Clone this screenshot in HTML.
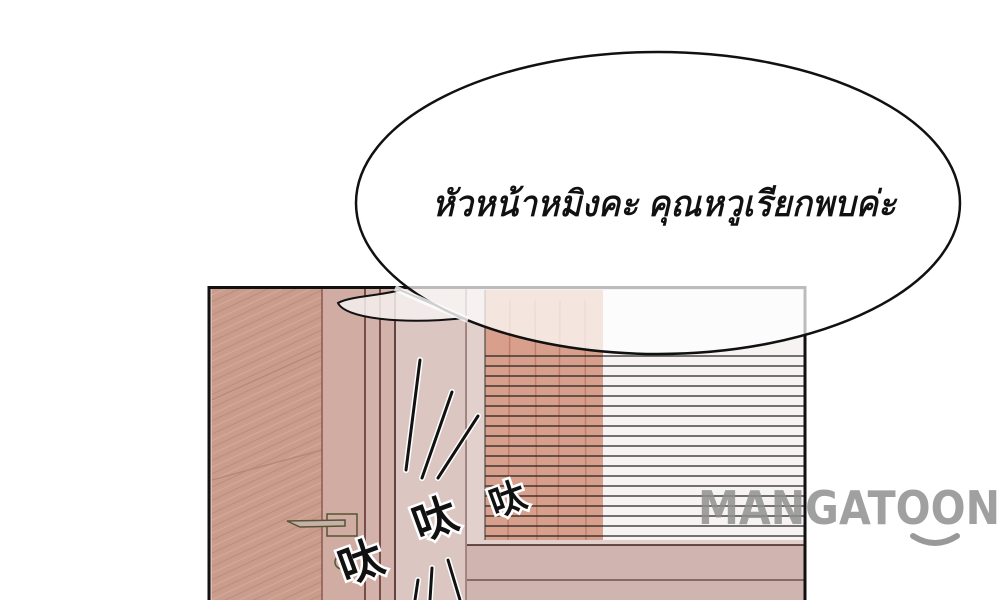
<!DOCTYPE html>
<html><head><meta charset="utf-8"><style>
html,body{margin:0;padding:0;background:#fff;width:1000px;height:600px;overflow:hidden}
</style></head><body>
<svg width="1000" height="600" viewBox="0 0 1000 600" xmlns="http://www.w3.org/2000/svg">
<defs>
<pattern id="wood" width="12" height="12" patternUnits="userSpaceOnUse" patternTransform="rotate(-25)">
<rect width="12" height="12" fill="#c99c8c"/>
<line x1="0" y1="3" x2="12" y2="3" stroke="#bb8d7f" stroke-width="1"/>
<line x1="0" y1="9" x2="12" y2="9" stroke="#d4ab9c" stroke-width="1"/>
</pattern>
</defs>
<rect width="1000" height="600" fill="#fff"/>
<rect x="209" y="286" width="596" height="314" fill="#d8bdb7"/>
<rect x="212" y="289" width="110" height="311" fill="url(#wood)"/>
<line x1="212" y1="400" x2="322" y2="350" stroke="#b8887c" stroke-width="1.5"/>
<line x1="212" y1="480" x2="322" y2="450" stroke="#b8887c" stroke-width="1.5"/>
<rect x="322" y="289" width="43" height="311" fill="#d1aca3"/>
<rect x="365" y="289" width="30" height="311" fill="#d3b2ab"/>
<line x1="322" y1="289" x2="322" y2="600" stroke="#8a5a52" stroke-width="1.5"/>
<line x1="365" y1="289" x2="365" y2="600" stroke="#5a2c28" stroke-width="1.5"/>
<line x1="380" y1="289" x2="380" y2="600" stroke="#5a2c28" stroke-width="1.5"/>
<line x1="395" y1="289" x2="395" y2="600" stroke="#3a1e1c" stroke-width="1.5"/>
<rect x="396" y="289" width="70" height="311" fill="#dcc6c2"/>
<line x1="466" y1="289" x2="466" y2="600" stroke="#6a4a48" stroke-width="1"/>
<rect x="467" y="289" width="338" height="311" fill="#e2d0cc"/>
<rect x="485" y="290" width="320" height="250" fill="#f7f3f2"/>
<rect x="485" y="290" width="118" height="250" fill="#d8a08c"/>
<g stroke="#c07e6a" stroke-width="1.5">
<line x1="510" y1="300" x2="508" y2="540"/><line x1="535" y1="300" x2="537" y2="540"/><line x1="560" y1="300" x2="558" y2="540"/><line x1="585" y1="300" x2="586" y2="540"/>
</g>
<rect x="467" y="545" width="338" height="55" fill="#cfb4af"/>
<line x1="467" y1="545" x2="805" y2="545" stroke="#3a2220" stroke-width="1.5"/>
<line x1="467" y1="580" x2="805" y2="580" stroke="#3a2220" stroke-width="1"/>
<g stroke="#222" stroke-width="1.2">
<line x1="485" y1="356" x2="805" y2="356"/><line x1="485" y1="366" x2="805" y2="366"/><line x1="485" y1="376" x2="805" y2="376"/><line x1="485" y1="386" x2="805" y2="386"/><line x1="485" y1="396" x2="805" y2="396"/><line x1="485" y1="406" x2="805" y2="406"/><line x1="485" y1="416" x2="805" y2="416"/><line x1="485" y1="426" x2="805" y2="426"/><line x1="485" y1="436" x2="805" y2="436"/><line x1="485" y1="446" x2="805" y2="446"/><line x1="485" y1="456" x2="805" y2="456"/><line x1="485" y1="466" x2="805" y2="466"/><line x1="485" y1="476" x2="805" y2="476"/><line x1="485" y1="486" x2="805" y2="486"/><line x1="485" y1="496" x2="805" y2="496"/><line x1="485" y1="506" x2="805" y2="506"/><line x1="485" y1="516" x2="805" y2="516"/><line x1="485" y1="526" x2="805" y2="526"/><line x1="485" y1="536" x2="805" y2="536"/>
</g>
<line x1="485" y1="290" x2="485" y2="540" stroke="#333" stroke-width="1"/>
<rect x="327" y="514" width="30" height="22" fill="none" stroke="#553" stroke-width="1.5"/>
<path d="M287 521 L345 520 L345 526 L300 527 Z" fill="#c8b0aa" stroke="#553" stroke-width="1.5"/>
<circle cx="342" cy="562" r="7" fill="none" stroke="#553" stroke-width="1.5"/>
<path d="M209 600 V287.5 H805 V600" fill="none" stroke="#111" stroke-width="3"/>
<g stroke="#fff" stroke-width="6" stroke-linecap="round">
<line x1="420" y1="360" x2="406" y2="470"/><line x1="452" y1="392" x2="422" y2="478"/><line x1="478" y1="416" x2="438" y2="478"/>
<line x1="415" y1="600" x2="418" y2="580"/><line x1="430" y1="600" x2="432" y2="568"/><line x1="460" y1="600" x2="448" y2="560"/>
</g>
<g stroke="#111" stroke-width="3" stroke-linecap="round">
<line x1="420" y1="360" x2="406" y2="470"/><line x1="452" y1="392" x2="422" y2="478"/><line x1="478" y1="416" x2="438" y2="478"/>
<line x1="415" y1="600" x2="418" y2="580"/><line x1="430" y1="600" x2="432" y2="568"/><line x1="460" y1="600" x2="448" y2="560"/>
</g>
<g font-family="DejaVu Sans, sans-serif" font-size="44" font-weight="bold" fill="#111" stroke="#fff" stroke-width="5" paint-order="stroke">
<text x="336" y="578" transform="rotate(-20 358 555)">呔</text>
<text x="410" y="535" transform="rotate(-20 432 512)">呔</text>
<text x="488" y="512" font-size="36" transform="rotate(-20 506 495)">呔</text>
</g>
<path d="M400 290 C 380 296, 350 296, 338 303 C 345 318, 400 325, 465 318 Z" fill="#f4f0ef" fill-opacity="0.85" stroke="#111" stroke-width="2"/>
<ellipse cx="658" cy="203" rx="302" ry="151" fill="#fff" fill-opacity="0.72" stroke="#111" stroke-width="2.5"/>
<path d="M395 288 C 420 300, 450 312, 468 320" fill="none" stroke="#fff" stroke-width="6" opacity="0.8"/>
<text x="432" y="216" font-family="Liberation Sans, DejaVu Sans, sans-serif" font-size="36" font-style="italic" fill="#111" stroke="#111" stroke-width="0.8" textLength="464" lengthAdjust="spacingAndGlyphs">หัวหน้าหมิงคะ คุณหวูเรียกพบค่ะ</text>
<text x="698" y="524" font-family="DejaVu Sans, sans-serif" font-size="46" font-weight="bold" fill="#8f8f8f" fill-opacity="0.85" textLength="302" lengthAdjust="spacingAndGlyphs">MANGATOON</text>
<path d="M913 536 Q 935 550 957 536" fill="none" stroke="#999" stroke-width="6" stroke-linecap="round"/>
</svg>
</body></html>
